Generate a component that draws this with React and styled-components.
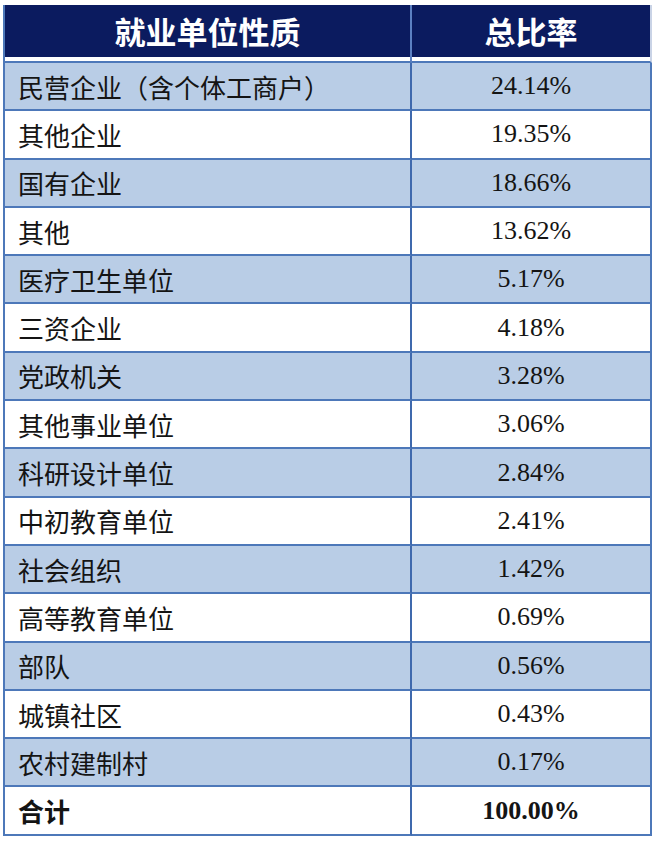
import React from 'react';
import styled, { createGlobalStyle } from 'styled-components';

const rows = [
  ['民营企业（含个体工商户）', '24.14%'],
  ['其他企业', '19.35%'],
  ['国有企业', '18.66%'],
  ['其他', '13.62%'],
  ['医疗卫生单位', '5.17%'],
  ['三资企业', '4.18%'],
  ['党政机关', '3.28%'],
  ['其他事业单位', '3.06%'],
  ['科研设计单位', '2.84%'],
  ['中初教育单位', '2.41%'],
  ['社会组织', '1.42%'],
  ['高等教育单位', '0.69%'],
  ['部队', '0.56%'],
  ['城镇社区', '0.43%'],
  ['农村建制村', '0.17%'],
];

const GlobalStyle = createGlobalStyle`
  body { margin: 0; background: #fff; }
`;

const App = () => (
  <Page>
    <GlobalStyle />
    <Table>
      <colgroup>
        <col style={{ width: 407 }} />
        <col style={{ width: 240 }} />
      </colgroup>
      <thead>
        <tr>
          <HeadCell>就业单位性质</HeadCell>
          <HeadCell>总比率</HeadCell>
        </tr>
      </thead>
      <tbody>
        {rows.map(([name, rate], i) => (
          <tr key={name}>
            <NameCell $shaded={i % 2 === 0}>{name}</NameCell>
            <RateCell $shaded={i % 2 === 0}>{rate}</RateCell>
          </tr>
        ))}
        <tr>
          <NameCell $bold>合计</NameCell>
          <RateCell $bold>100.00%</RateCell>
        </tr>
      </tbody>
    </Table>
  </Page>
);

export default App;

const Page = styled.div`
  padding: 5px 4px 0 3px;
`;

const Table = styled.table`
  width: 647px;
  table-layout: fixed;
  border-collapse: separate;
  border-spacing: 0;
  border-left: 2px solid #4d78b9;
`;

const HeadCell = styled.th`
  height: 58px;
  box-sizing: border-box;
  padding: 0 0 6px;
  background: linear-gradient(#0b1b5f, #0b1b5f) top / 100% 52px no-repeat, #fff;
  border-bottom: 2px solid #4d78b9;
  color: #fff;
  font-family: "Noto Sans CJK SC", sans-serif;
  font-size: 31px;
  font-weight: 700;
  text-align: center;
  border-right: 2px solid #5c80c2;
  &:last-child { border-right: 2px solid #c9d3e6; }
`;

const NameCell = styled.td`
  height: 48.3px;
  box-sizing: border-box;
  padding: 0 0 0 13px;
  background: ${({ $shaded }) => ($shaded ? '#b9cde6' : '#fff')};
  border-bottom: 2px solid #4d78b9;
  border-right: 2px solid #3f69ad;
  color: #141414;
  font-family: "Noto Sans CJK SC", sans-serif;
  font-size: 26px;
  font-weight: ${({ $bold }) => ($bold ? 700 : 400)};
  white-space: nowrap;
`;

const RateCell = styled.td`
  height: 48.3px;
  box-sizing: border-box;
  padding: 0;
  background: ${({ $shaded }) => ($shaded ? '#b9cde6' : '#fff')};
  border-bottom: 2px solid #4d78b9;
  border-right: 2px solid #4d78b9;
  color: #141414;
  font-family: "Liberation Serif", serif;
  font-size: 26px;
  font-weight: ${({ $bold }) => ($bold ? 700 : 400)};
  text-align: center;
`;
